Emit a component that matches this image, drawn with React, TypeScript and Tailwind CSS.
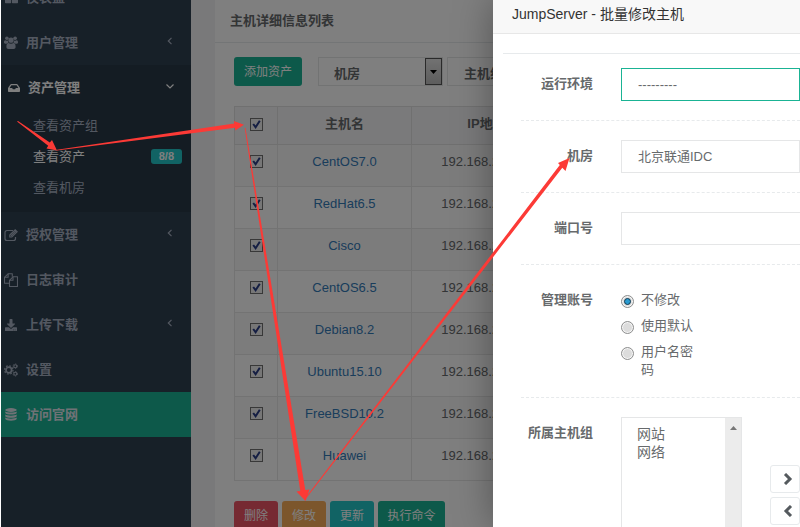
import type { ReactNode } from 'react';
import { FaInbox, FaDownload, FaThLarge } from 'react-icons/fa';

const hosts = ['CentOS7.0', 'RedHat6.5', 'Cisco', 'CentOS6.5', 'Debian8.2', 'Ubuntu15.10', 'FreeBSD10.2', 'Huawei'];

function UsersIcon() {
  return (
    <svg viewBox="0 0 14 13" className="h-[13px] w-[14px] shrink-0" fill="currentColor">
      <circle cx="2.900" cy="2.300" r="1.800" />
      <circle cx="11.100" cy="2.300" r="1.800" />
      <circle cx="7" cy="4.200" r="2.600" />
      <path d="M0 6.500C0 5 .6 4.200 1.300 4.300c.9.600 1.900.5 2.700.1-.1 1 .1 1.700.6 2.300-.9.100-1.500.4-2 1H1.300C.5 7.700 0 7.300 0 6.500z" />
      <path d="M14 6.500c0-1.500-.6-2.300-1.300-2.200-.9.600-1.900.5-2.700.1.100 1-.1 1.700-.6 2.300.9.100 1.500.4 2 1h1.300c.8 0 1.300-.4 1.300-1.200z" />
      <path d="M2.400 11c0-2.500.6-3.900 2.200-4 1.300 1.100 3.500 1.100 4.800 0 1.600.1 2.200 1.500 2.200 4 0 1.200-.8 1.900-1.900 1.900H4.300c-1.100 0-1.900-.7-1.900-1.900z" />
    </svg>
  );
}

function EditIcon() {
  return (
    <svg viewBox="0 0 14 14" className="size-[14px] shrink-0" fill="none" stroke="currentColor" strokeWidth="1.200">
      <path d="M9 2.500H3A2 2 0 0 0 1 4.500V10.500a2 2 0 0 0 2 2h6.500a2 2 0 0 0 2-2V9" />
      <path d="M5.800 7 11.200 1.800l1.900 1.900-5.300 5.300H5.800z" />
      <path d="M7 7.800 11.800 3" />
    </svg>
  );
}

function FilesIcon() {
  return (
    <svg viewBox="0 0 14 14" className="size-[14px] shrink-0" fill="none" stroke="currentColor" strokeWidth="1.100" strokeLinejoin="round">
      <path d="M5.500 10.300h-5V4.300L4.100.8h4.200v3" />
      <path d="M4.100.8v3.500H.5" />
      <path d="M5.500 7.300 9 3.800h4.500v9.700h-8z" />
      <path d="M9 3.800v3.500H5.500" />
    </svg>
  );
}

function CogsIcon() {
  return (
    <svg viewBox="0 0 14 14" className="size-[14px] shrink-0" fill="none" stroke="currentColor">
      <circle cx="4.800" cy="7" r="2.800" strokeWidth="1.700" />
      <circle cx="4.800" cy="7" r="4.200" strokeWidth="1.200" strokeDasharray="1.650 1.650" />
      <circle cx="11.300" cy="3.200" r="1.500" strokeWidth="1.100" />
      <circle cx="11.300" cy="3.200" r="2.300" strokeWidth=".8" strokeDasharray="1.200 1.200" />
      <circle cx="11.300" cy="10.800" r="1.500" strokeWidth="1.100" />
      <circle cx="11.300" cy="10.800" r="2.300" strokeWidth=".8" strokeDasharray="1.200 1.200" />
    </svg>
  );
}

function DatabaseIcon() {
  return (
    <svg viewBox="0 0 12 13" className="h-[13px] w-3 shrink-0" fill="currentColor">
      <ellipse cx="6" cy="2" rx="5.700" ry="1.900" />
      <path d="M.3 3.400c2 1.500 9.400 1.500 11.400 0v1.700c-1 2-10.400 2-11.400 0z" />
      <path d="M.3 6.500c2 1.500 9.400 1.500 11.400 0v1.700c-1 2-10.400 2-11.400 0z" />
      <path d="M.3 9.600c2 1.500 9.400 1.500 11.400 0v1.500c-1 2.200-10.400 2.200-11.400 0z" />
    </svg>
  );
}

function Angle({ down }: { down?: boolean }) {
  return (
    <svg viewBox="0 0 8 8" className="mb-1 size-2" fill="none" stroke="currentColor" strokeWidth="1.200">
      <path d={down ? 'M.5 2.500 4 6l3.500-3.500' : 'M5.500.8 2.300 4l3.200 3.200'} />
    </svg>
  );
}

function Chevron({ left }: { left?: boolean }) {
  return (
    <svg viewBox="0 0 10 12" className="h-3 w-[10px]" fill="none" stroke="#555a5e" strokeWidth="3">
      <path d={left ? 'M8 1 3 6l5 5' : 'M2 1l5 5-5 5'} />
    </svg>
  );
}

function NavItem({ icon, label, angle, className = 'text-[#a7b1c2]' }: { icon: ReactNode; label: string; angle?: ReactNode; className?: string }) {
  return (
    <a href="#" className={`flex h-[45px] items-center gap-2 pr-[17px] pl-[3px] font-bold ${className}`}>
      <span className="flex min-w-[14px] justify-center">{icon}</span>
      <span className="flex-1">{label}</span>
      {angle}
    </a>
  );
}

function Check({ label }: { label: string }) {
  return (
    <span className="mx-auto grid size-[13px] place-items-center">
      <input type="checkbox" defaultChecked aria-label={label} className="col-start-1 row-start-1 size-[13px] appearance-none border border-[#707070] bg-[#eee]" />
      <svg viewBox="0 0 9 9" className="pointer-events-none col-start-1 row-start-1 size-[9px]" fill="none" stroke="#2a3d86" strokeWidth="2">
        <path d="M1.200 4 3.600 7.200 7.800.8" />
      </svg>
    </span>
  );
}

function FormRow({ label, htmlFor, children }: { label: string; htmlFor: string; children: ReactNode }) {
  return (
    <div className="flex gap-7 border-b border-dashed border-[#e7eaec] py-[19px]">
      <label htmlFor={htmlFor} className="w-[72px] shrink-0 pt-[7px] text-right font-bold">{label}</label>
      {children}
    </div>
  );
}

function Radio({ label, checked }: { label: string; checked?: boolean }) {
  return (
    <label className="flex gap-[7px] leading-[18px]">
      <span className="mt-1 grid size-[13px] shrink-0 place-items-center">
        <input type="radio" name="account" defaultChecked={checked} className="col-start-1 row-start-1 size-[13px] appearance-none rounded-full border border-[#8e8f8f] bg-[#dcdcdc] shadow-[inset_0_0_0_1px_#f6f6f6]" />
        {checked && <span className="pointer-events-none col-start-1 row-start-1 size-[7px] rounded-full border border-[#12394f] bg-[#2a9bd0]" />}
      </span>
      <span className="w-[54px]">{label}</span>
    </label>
  );
}

export default function App() {
  return (
    <div className="relative h-screen overflow-hidden bg-white font-['Liberation_Sans','Noto_Sans_CJK_SC',sans-serif] text-[13px] leading-[18px] text-[#676a6c]">
      <div className="flex h-full pl-px">
        <nav className="w-[190px] shrink-0 bg-[#2f4050]">
          <div className="-mt-[25px]">
            <NavItem icon={<FaThLarge className="size-[13px]" />} label="仪表盘" />
            <NavItem icon={<UsersIcon />} label="用户管理" angle={<Angle />} />
            <div className="bg-[#293846] pb-[9px]">
              <NavItem icon={<FaInbox className="ml-1 size-3 shrink-0" />} label="资产管理" angle={<Angle down />} className="text-white" />
              <ul className="flex flex-col text-[#a7b1c2]">
                <li><a href="#" className="flex h-[31px] items-center pl-8">查看资产组</a></li>
                <li>
                  <a href="#" className="flex h-[31px] items-center justify-between pr-[9px] pl-8 text-white">
                    查看资产
                    <span className="rounded-[3px] bg-[#23c6c8] px-2 text-[11px] leading-[15px] font-bold">8/8</span>
                  </a>
                </li>
                <li><a href="#" className="flex h-[31px] items-center pl-8">查看机房</a></li>
              </ul>
            </div>
            <NavItem icon={<EditIcon />} label="授权管理" angle={<Angle />} />
            <NavItem icon={<FilesIcon />} label="日志审计" />
            <NavItem icon={<FaDownload className="size-[12px]" />} label="上传下载" angle={<Angle />} />
            <NavItem icon={<CogsIcon />} label="设置" />
            <NavItem icon={<DatabaseIcon />} label="访问官网" className="bg-[#1ab394] text-[#dfe4ed]" />
          </div>
        </nav>

        <main className="min-w-0 flex-1 bg-[#f3f3f4] pl-6">
          <section className="h-full bg-white">
            <h5 className="flex h-[43px] items-center border-b border-[#e7eaec] px-[15px] text-[13px] font-bold">主机详细信息列表</h5>
            <div className="px-[19px] pt-[14px]">
              <div className="flex h-[29px] gap-1">
                <button className="mr-3 w-[68px] rounded-[3px] bg-[#1ab394] text-[12px] text-white">添加资产</button>
                <div className="grid w-[125px] grid-cols-[1fr_17px] border border-[#e5e6e7]">
                  <select aria-label="机房" className="col-span-2 col-start-1 row-start-1 appearance-none bg-transparent px-[15px] pt-1 font-bold">
                    <option>机房</option>
                  </select>
                  <span className="pointer-events-none col-start-2 row-start-1 grid place-items-center border border-[#555] bg-linear-to-b from-[#e4e4e4] to-[#bbb]">
                    <svg viewBox="0 0 7 4" className="h-1 w-[7px]"><path d="M0 0h7L3.500 4z" /></svg>
                  </span>
                </div>
                <select aria-label="主机组" className="w-[125px] appearance-none border border-[#e5e6e7] px-[16px] pt-1 font-bold">
                  <option>主机组</option>
                </select>
              </div>
              <table className="mt-5 w-full table-fixed border-collapse text-center">
                <colgroup>
                  <col className="w-[43px]" />
                  <col className="w-[134px]" />
                  <col className="w-[154px]" />
                  <col />
                </colgroup>
                <thead>
                  <tr className="h-[38px] bg-[#f5f5f6]">
                    <th className="border border-[#e0e0e0] pb-[3px]"><Check label="全选" /></th>
                    <th className="border border-[#e0e0e0] pb-[3px]">主机名</th>
                    <th className="border border-[#e0e0e0] pr-1 pb-[3px]">IP地址</th>
                    <th className="border border-[#e0e0e0]" />
                  </tr>
                </thead>
                <tbody>
                  {hosts.map((host) => (
                    <tr key={host} className="h-[42px] odd:bg-[#f9f9f9]">
                      <td className="border border-[#e7e7e7] pb-2"><Check label={host} /></td>
                      <td className="border border-[#e7e7e7] pb-2"><a href="#" className="text-[#337ab7]">{host}</a></td>
                      <td className="border border-[#e7e7e7] pr-1 pb-2">192.168.244.14</td>
                      <td className="border border-[#e7e7e7]" />
                    </tr>
                  ))}
                </tbody>
              </table>
              <div className="mt-5 flex h-[29px] gap-1 text-[12px] text-white">
                <button className="w-11 rounded-[3px] bg-[#ed5565]">删除</button>
                <button className="w-11 rounded-[3px] bg-[#f8ac59]">修改</button>
                <button className="w-11 rounded-[3px] bg-[#23c6c8]">更新</button>
                <button className="w-[67px] rounded-[3px] bg-[#1ab394]">执行命令</button>
              </div>
            </div>
          </section>
        </main>
      </div>

      <div className="absolute inset-y-0 right-0 left-px bg-black/50" />

      <div role="dialog" aria-label="批量修改主机" className="absolute inset-y-0 right-0 left-[493px] bg-white shadow-[0_0_36px_rgba(0,0,0,0.35)]">
        <h4 className="h-[34px] border-b border-[#e7e7e7] bg-[#f8f8f8] px-[19px] pt-[5px] text-[14px] text-[#333]">JumpServer - 批量修改主机</h4>
        <form className="mt-[19px] ml-[10px] border-t border-[#e7eaec] pl-[18px]">
          <div className="-mt-[5px]">
            <FormRow label="运行环境" htmlFor="env">
              <select id="env" className="h-[33px] flex-1 appearance-none border border-[#1ab394] bg-white px-4">
                <option>---------</option>
              </select>
            </FormRow>
            <FormRow label="机房" htmlFor="idc">
              <select id="idc" className="h-[33px] flex-1 appearance-none border border-[#e5e6e7] bg-white px-4">
                <option>北京联通IDC</option>
              </select>
            </FormRow>
            <FormRow label="端口号" htmlFor="port">
              <input id="port" className="h-[33px] flex-1 border border-[#e5e6e7] px-4" />
            </FormRow>
            <div className="flex gap-7 border-b border-dashed border-[#e7eaec] pt-[26px] pb-[18px]">
              <span className="w-[72px] text-right font-bold">管理账号</span>
              <div className="flex flex-col gap-2">
                <Radio label="不修改" checked />
                <Radio label="使用默认" />
                <Radio label="用户名密码" />
              </div>
            </div>
            <div className="flex pt-[19px]">
              <label htmlFor="groups" className="w-[72px] shrink-0 pt-[7px] text-right font-bold">所属主机组</label>
              <div className="ml-7 flex h-[180px] w-[121px] border border-[#e5e6e7]">
                <select id="groups" multiple className="flex-1 appearance-none overflow-hidden px-[15px] py-[5px] text-[14px]">
                  <option className="h-[18px] leading-[18px]">网站</option>
                  <option className="h-[18px] leading-[18px]">网络</option>
                </select>
                <span className="flex w-4 justify-center bg-[#ececec] pt-2">
                  <svg viewBox="0 0 7 4" className="h-1 w-[7px]" fill="#777"><path d="M0 4h7L3.500 0z" /></svg>
                </span>
              </div>
              <div className="mt-12 ml-7 flex flex-1 flex-col gap-1">
                <button type="button" aria-label="添加" className="h-7 rounded-[3px] border border-[#e7eaec] pl-3"><Chevron /></button>
                <button type="button" aria-label="移除" className="h-7 rounded-[3px] border border-[#e7eaec] pl-3"><Chevron left /></button>
              </div>
            </div>
          </div>
        </form>
      </div>

      <svg className="pointer-events-none absolute top-0 left-0" width="800" height="527" fill="#fc3a36">
        <path d="M17 121.500 48.200 145.800 46.500 148.500 57 150.500 52 140 49.800 142.500 18 121z" />
        <path d="M57 149.700 234.300 123.600 233.800 121 244 124.800 235.200 130.500 235 127.800 57 150.600z" />
        <path d="M244.700 128 300.300 491 296.500 491.500 305.500 501 309.500 489.500 305.300 490 245.500 128z" />
        <path d="M304.500 499.500 562.300 166.800 565.500 170 569.500 157 558 162 559.800 164 304.500 498z" transform="translate(0 1)" />
      </svg>
    </div>
  );
}
